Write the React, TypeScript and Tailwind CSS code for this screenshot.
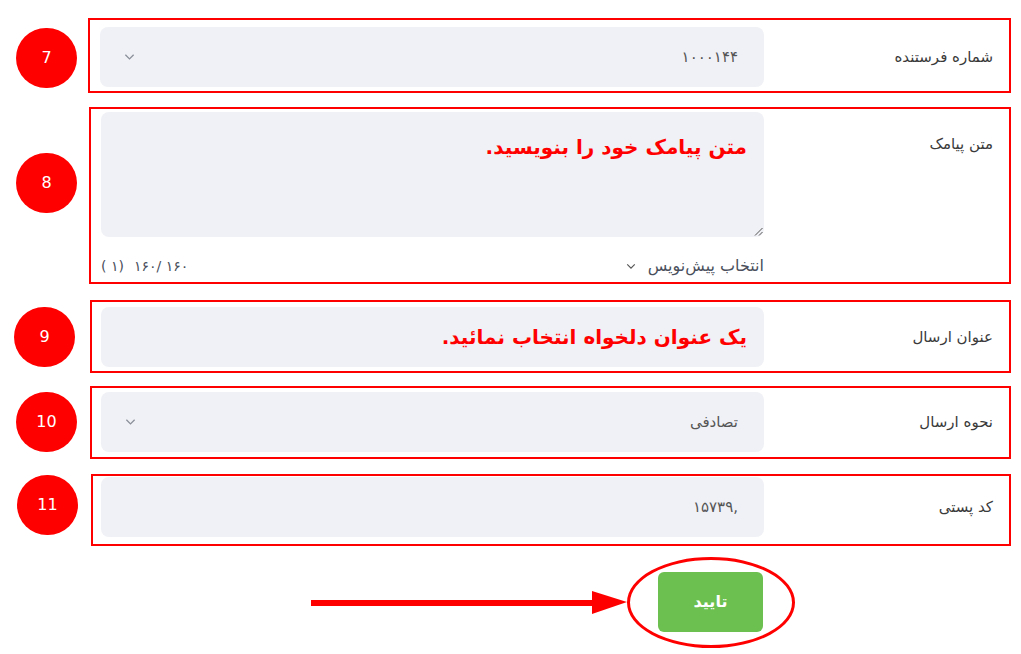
import React from "react";

const font = { fontFamily: '"DejaVu Sans", "Noto Sans", sans-serif' };

const Chevron: React.FC<{ className?: string }> = ({ className }) => (
  <svg viewBox="0 0 12 8" className={className} fill="none" stroke="currentColor" strokeWidth="1.4">
    <path d="M1.5 1.5 L6 6 L10.5 1.5" />
  </svg>
);

const Badge: React.FC<{ n: string; className: string }> = ({ n, className }) => (
  <div className={`w-[61px] h-[60px] rounded-full bg-[#ff0000] text-white flex items-center justify-center text-[16px] shrink-0 ${className}`}>
    {n}
  </div>
);

const App: React.FC = () => {
  return (
    <div className="w-[1021px] h-[654px] bg-white pt-[18px] pr-[10px] text-[#3a3a3a]" style={font}>
      {/* 7 - sender number */}
      <div className="flex items-start">
        <div className="w-[88px] shrink-0">
          <Badge n="7" className="ml-[16px] mt-[10px]" />
        </div>
        <div dir="rtl" className="flex-1 h-[75px] border-2 border-[#ff0000] flex items-start pr-[16px] pl-[10px] pt-[7px]">
          <div className="w-[229px] shrink-0 h-[60px] flex items-center text-[15px]">شماره فرستنده</div>
          <div className="flex-1 h-[60px] rounded-lg bg-[#f0f1f6] flex items-center justify-between pr-[26px] pl-[24px] text-[15px] text-[#555]">
            <span>۱۰۰۰۱۴۴</span>
            <Chevron className="w-[11px] h-[8px] text-[#8a8f99]" />
          </div>
        </div>
      </div>

      {/* 8 - message text */}
      <div className="flex items-start mt-[14px]">
        <div className="w-[88px] shrink-0">
          <Badge n="8" className="ml-[16px] mt-[46px]" />
        </div>
        <div dir="rtl" className="flex-1 h-[177px] ml-[1px] border-2 border-[#ff0000] flex items-start pr-[16px] pl-[10px] pt-[3px]">
          <div className="w-[229px] shrink-0 pt-[21px] text-[15px]">متن پیامک</div>
          <div className="flex-1 flex flex-col">
            <div className="relative h-[125px] w-full rounded-lg bg-[#f0f1f6] pr-[17px] pt-[20px] text-[20px] font-bold text-[#ff0000]">
              متن پیامک خود را بنویسید.
              <svg className="absolute right-[1px] bottom-[1px] w-[9px] h-[9px]" viewBox="0 0 9 9" stroke="#555" strokeWidth="1">
                <path d="M8.5 1 L1 8.5 M8.5 5 L5 8.5" />
              </svg>
            </div>
            <div className="flex items-center justify-between mt-[17px] text-[16px] text-[#4a4f5c]">
              <div className="flex items-center gap-[12px]">
                <span>انتخاب پیش‌نویس</span>
                <Chevron className="w-[10px] h-[7px] text-[#555]" />
              </div>
              <div dir="ltr" className="flex items-center gap-[10px] text-[14px]">
                <span>( ۱)</span>
                <span>۱۶۰/ ۱۶۰</span>
              </div>
            </div>
          </div>
        </div>
      </div>

      {/* 9 - send title */}
      <div className="flex items-start mt-[16px]">
        <div className="w-[88px] shrink-0">
          <Badge n="9" className="ml-[14px] mt-[7px]" />
        </div>
        <div dir="rtl" className="flex-1 h-[73px] ml-[2px] border-2 border-[#ff0000] flex items-start pr-[16px] pl-[9px] pt-[5px]">
          <div className="w-[229px] shrink-0 h-[60px] flex items-center text-[15px]">عنوان ارسال</div>
          <div className="flex-1 h-[60px] rounded-lg bg-[#f0f1f6] flex items-center pr-[17px] text-[20px] font-bold text-[#ff0000]">
            یک عنوان دلخواه انتخاب نمائید.
          </div>
        </div>
      </div>

      {/* 10 - send method */}
      <div className="flex items-start mt-[13px]">
        <div className="w-[88px] shrink-0">
          <Badge n="10" className="ml-[16px] mt-[6px]" />
        </div>
        <div dir="rtl" className="flex-1 h-[73px] ml-[2px] border-2 border-[#ff0000] flex items-start pr-[16px] pl-[9px] pt-[4px]">
          <div className="w-[229px] shrink-0 h-[60px] flex items-center text-[15px]">نحوه ارسال</div>
          <div className="flex-1 h-[60px] rounded-lg bg-[#f0f1f6] flex items-center justify-between pr-[26px] pl-[24px] text-[15px] text-[#555]">
            <span>تصادفی</span>
            <Chevron className="w-[11px] h-[8px] text-[#8a8f99]" />
          </div>
        </div>
      </div>

      {/* 11 - postal code */}
      <div className="flex items-start mt-[15px]">
        <div className="w-[88px] shrink-0">
          <Badge n="11" className="ml-[17px] mt-[1px]" />
        </div>
        <div dir="rtl" className="flex-1 h-[72px] ml-[3px] border-2 border-[#ff0000] flex items-start pr-[16px] pl-[8px] pt-[1px]">
          <div className="w-[229px] shrink-0 h-[60px] flex items-center text-[15px]">کد پستی</div>
          <div className="flex-1 h-[60px] rounded-lg bg-[#f0f1f6] flex items-center pr-[26px] text-[15px] text-[#555]">
            <span dir="ltr">۱۵۷۳۹,</span>
          </div>
        </div>
      </div>

      {/* submit */}
      <div className="flex justify-end pr-[248px] mt-[26px]">
        <div className="relative">
          <button className="w-[105px] h-[60px] rounded-md bg-[#6cc04f] text-white text-[16px] font-bold">
            تایید
          </button>
          <div className="absolute left-[-31px] top-[-15px] w-[168px] h-[91px] rounded-[50%] border-[3px] border-[#ff0000]" />
          <svg className="absolute left-[-347px] top-[19px] w-[316px] h-[24px]" viewBox="0 0 316 24">
            <rect x="0" y="9" width="283" height="6" fill="#ff0000" />
            <polygon points="281,0 316,11 281,23" fill="#ff0000" />
          </svg>
        </div>
      </div>
    </div>
  );
};

export default App;
